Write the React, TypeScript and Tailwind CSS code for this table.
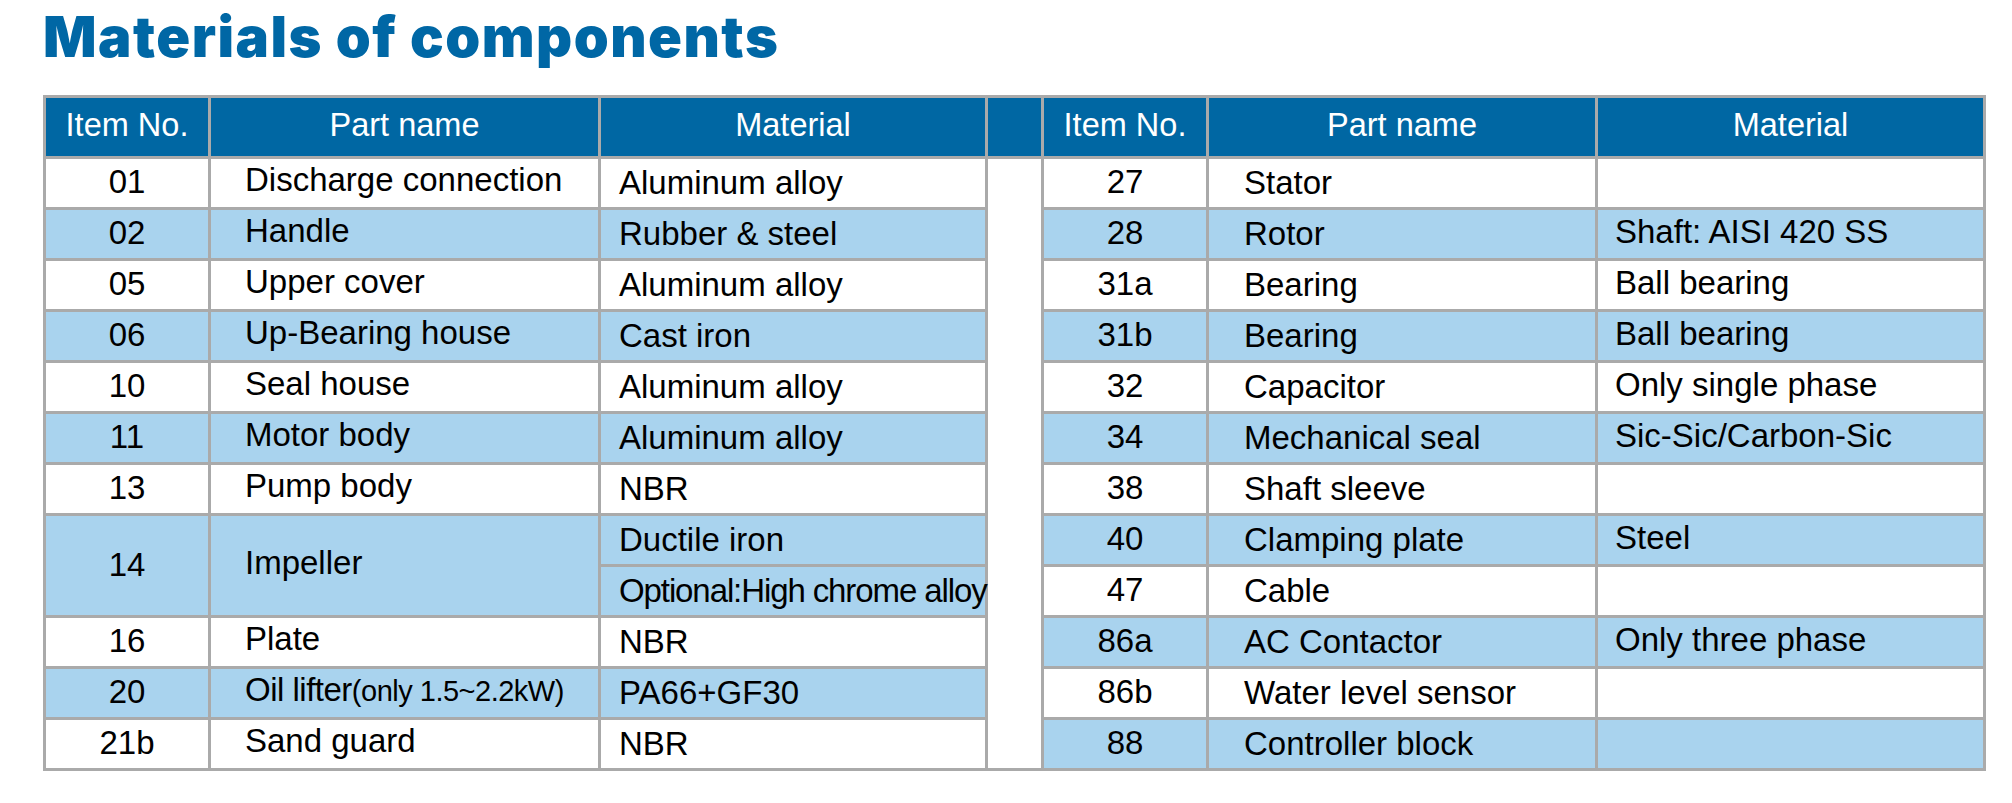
import React from "react";

type Row = { no: string; name: React.ReactNode; mat: string };

const leftRows: Row[] = [
  { no: "01", name: "Discharge connection", mat: "Aluminum alloy" },
  { no: "02", name: "Handle", mat: "Rubber & steel" },
  { no: "05", name: "Upper cover", mat: "Aluminum alloy" },
  { no: "06", name: "Up-Bearing house", mat: "Cast iron" },
  { no: "10", name: "Seal house", mat: "Aluminum alloy" },
  { no: "11", name: "Motor body", mat: "Aluminum alloy" },
  { no: "13", name: "Pump body", mat: "NBR" },
];

const leftTail: Row[] = [
  { no: "16", name: "Plate", mat: "NBR" },
  {
    no: "20",
    name: (
      <span className="tracking-[-0.5px]">
        Oil lifter<span className="text-[29px]">(only 1.5~2.2kW)</span>
      </span>
    ),
    mat: "PA66+GF30",
  },
  { no: "21b", name: "Sand guard", mat: "NBR" },
];

const rightRows: Row[] = [
  { no: "27", name: "Stator", mat: "" },
  { no: "28", name: "Rotor", mat: "Shaft: AISI 420 SS" },
  { no: "31a", name: "Bearing", mat: "Ball bearing" },
  { no: "31b", name: "Bearing", mat: "Ball bearing" },
  { no: "32", name: "Capacitor", mat: "Only single phase" },
  { no: "34", name: "Mechanical seal", mat: "Sic-Sic/Carbon-Sic" },
  { no: "38", name: "Shaft sleeve", mat: "" },
  { no: "40", name: "Clamping plate", mat: "Steel" },
  { no: "47", name: "Cable", mat: "" },
  { no: "86a", name: "AC Contactor", mat: "Only three phase" },
  { no: "86b", name: "Water level sensor", mat: "" },
  { no: "88", name: "Controller block", mat: "" },
];

const cell = "border-[3px] border-[#aaaaaa] p-0 align-middle whitespace-nowrap leading-[32px]";
const noCls = `${cell} text-center pb-[2px]`;
const leftNameCls = `${cell} text-left pl-[34px] pb-[6px]`;
const leftMatCls = `${cell} text-left pl-[18px] pb-[1px]`;
const rightNameCls = `${cell} text-left pl-[35px] pb-[1px]`;
const rightMatCls = `${cell} text-left pl-[17px] pb-[5px]`;

function bg(blue: boolean) {
  return blue ? "bg-[#a9d3ee]" : "bg-white";
}

export default function App() {
  const body: React.ReactNode[] = [];
  for (let i = 0; i < 12; i++) {
    const r = rightRows[i];
    const rb = bg(i % 2 === 1);
    const leftCells: React.ReactNode[] = [];
    if (i < 7) {
      const l = leftRows[i];
      const lb = bg(i % 2 === 1);
      leftCells.push(
        <td key="ln" className={`${noCls} ${lb}`}>{l.no}</td>,
        <td key="lm" className={`${leftNameCls} ${lb}`}>{l.name}</td>,
        <td key="lt" className={`${leftMatCls} ${lb}`}>{l.mat}</td>
      );
    } else if (i === 7) {
      const lb = bg(true);
      leftCells.push(
        <td key="ln" rowSpan={2} className={`${noCls} ${lb}`}>14</td>,
        <td key="lm" rowSpan={2} className={`${leftNameCls} ${lb}`}>Impeller</td>,
        <td key="lt" className={`${leftMatCls} ${lb}`}>Ductile iron</td>
      );
    } else if (i === 8) {
      leftCells.push(
        <td key="lt" className={`${leftMatCls} ${bg(true)} tracking-[-1.1px]`}>
          Optional:High chrome alloy
        </td>
      );
    } else {
      const l = leftTail[i - 9];
      const lb = bg(i === 10);
      leftCells.push(
        <td key="ln" className={`${noCls} ${lb}`}>{l.no}</td>,
        <td key="lm" className={`${leftNameCls} ${lb}`}>{l.name}</td>,
        <td key="lt" className={`${leftMatCls} ${lb}`}>{l.mat}</td>
      );
    }
    body.push(
      <tr key={i} className="h-[51px]">
        {leftCells}
        {i === 0 && (
          <td rowSpan={12} className="border-[3px] border-[#aaaaaa] bg-white p-0"></td>
        )}
        <td className={`${noCls} ${rb}`}>{r.no}</td>
        <td className={`${rightNameCls} ${rb}`}>{r.name}</td>
        <td className={`${rightMatCls} ${rb}`}>{r.mat}</td>
      </tr>
    );
  }

  const th =
    "border-[3px] border-[#aaaaaa] bg-[#0067a3] text-white font-normal text-center align-middle p-0 pb-[4px] leading-[32px] text-[32.5px]";

  return (
    <div className="w-[2012px] h-[803px] bg-white pl-[43px] pt-[9px] overflow-hidden">
      <div
        className="h-[56px] leading-[56px] text-[56px] font-black text-[#0067a5] tracking-[1.5px] whitespace-nowrap"
        style={{ fontFamily: "Inter, 'Liberation Sans', Arial, sans-serif" }}
      >
        Materials of components
      </div>
      <table
        className="mt-[30px] border-collapse table-fixed w-[1943px] text-[33px] text-black"
        style={{ fontFamily: "'Liberation Sans', Arial, sans-serif" }}
      >
        <colgroup>
          <col className="w-[165px]" />
          <col className="w-[390px]" />
          <col className="w-[387px]" />
          <col className="w-[56px]" />
          <col className="w-[165px]" />
          <col className="w-[389px]" />
          <col className="w-[388px]" />
        </colgroup>
        <thead>
          <tr className="h-[61px]">
            <th className={th}>Item No.</th>
            <th className={th}>Part name</th>
            <th className={th}>Material</th>
            <th className={th}></th>
            <th className={th}>Item No.</th>
            <th className={th}>Part name</th>
            <th className={th}>Material</th>
          </tr>
        </thead>
        <tbody>{body}</tbody>
      </table>
    </div>
  );
}
